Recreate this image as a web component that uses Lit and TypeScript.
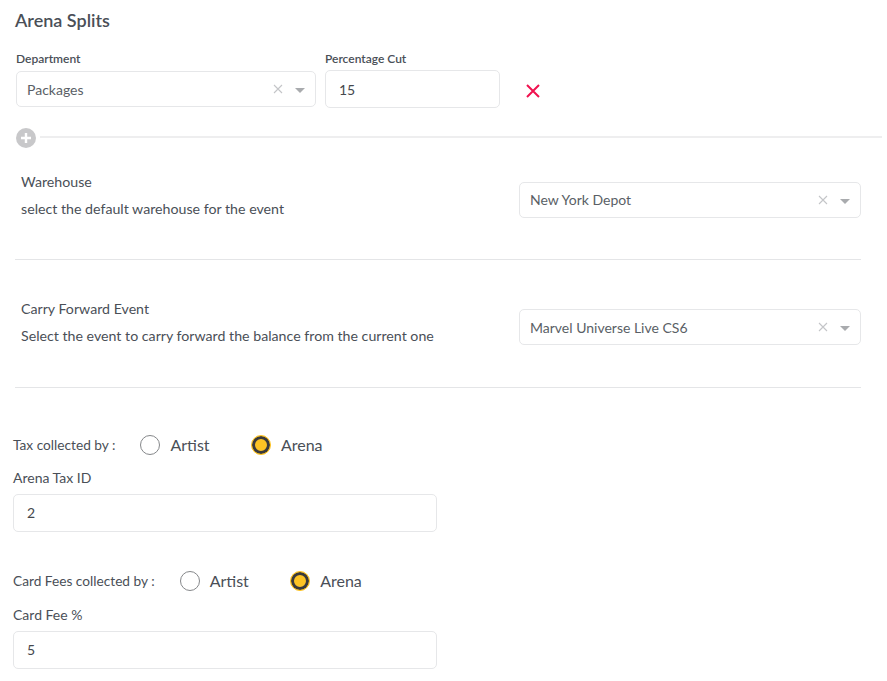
import { html, css, LitElement } from "lit";
import { customElement } from "lit/decorators.js";

@customElement("app-root")
export class AppRoot extends LitElement {
  static styles = css`
    :host {
      display: block;
      width: 887px;
      height: 681px;
      overflow: hidden;
      background: #fff;
      font-family: Lato, "Liberation Sans", sans-serif;
      color: #4a4f57;
      font-size: 14px;
    }
    * {
      box-sizing: border-box;
    }
    .title {
      margin: 0;
      padding: 9px 0 0 15px;
      height: 48px;
      font-size: 18px;
      line-height: 22px;
      font-weight: 600;
      color: #4a4f57;
    }
    .split {
      display: flex;
      align-items: flex-start;
      padding-left: 16px;
    }
    .split label {
      display: block;
      padding-top: 3px;
      font-size: 12px;
      line-height: 15px;
      height: 22px;
      font-weight: 600;
    }
    .dept {
      width: 300px;
      margin-right: 9px;
    }
    .dept label {
      height: 23px;
    }
    .pct {
      width: 175px;
    }
    .select {
      display: flex;
      align-items: center;
      height: 36px;
      border: 1px solid #e6e7e9;
      border-radius: 5px;
      padding: 0 10px;
      background: #fff;
      color: #5a5f66;
    }
    .select span {
      flex: 1;
      line-height: 20px;
      padding-top: 2px;
    }
    .select .clear {
      margin-right: 12px;
    }
    .select .caret {
      margin-top: 3px;
    }
    .input {
      display: flex;
      align-items: center;
      height: 38px;
      border: 1px solid #e6e7e9;
      border-radius: 5px;
      padding: 0 13px;
      color: #45484d;
    }
    .remove {
      margin: 35px 0 0 25px;
      display: block;
    }
    .adder {
      position: relative;
      margin: 28px 5px 0 40px;
      height: 2px;
      background: #eeeeef;
    }
    .plus {
      position: absolute;
      left: -24px;
      top: -8px;
    }
    .row {
      display: flex;
      justify-content: space-between;
      margin: 0 26px 0 15px;
      border-bottom: 1px solid #e4e5e7;
      padding-left: 6px;
    }
    .row.first {
      height: 122px;
      padding-top: 35px;
    }
    .row.second {
      height: 128px;
      padding-top: 40px;
    }
    .row .name,
    .row .desc {
      line-height: 18px;
      font-size: 14.2px;
    }
    .row .name {
      margin-bottom: 9px;
    }
    .row .select {
      width: 342px;
      margin-top: 9px;
    }
    .row.first .select span {
      padding-top: 0;
    }
    .collect {
      padding-left: 13px;
      width: 437px;
    }
    .collect .radios {
      display: flex;
      align-items: center;
      height: 20px;
      font-size: 13.7px;
    }
    .radios .lead {
      margin-right: 25px;
      padding-bottom: 2px;
    }
    .radio {
      display: flex;
      align-items: center;
      font-size: 16px;
      width: 110.5px;
    }
    .radio span {
      padding-bottom: 2px;
    }
    .radio i {
      display: block;
      width: 20px;
      height: 20px;
      border-radius: 50%;
      border: 1px solid #85878a;
      margin-right: 10px;
    }
    .radio.on i {
      border: 1px solid #fdc324;
      background: #fdc324;
      box-shadow: inset 0 0 0 3px #3a3a3c;
    }
    .collect .label {
      margin-top: 15px;
      height: 16px;
      line-height: 16px;
      font-size: 14px;
      margin-bottom: 8px;
    }
    .collect .input {
      padding-bottom: 2px;
    }
    .first-collect {
      margin-top: 47px;
    }
    .second-collect {
      margin-top: 39px;
    }
    .second-collect .label {
      margin-top: 16px;
    }
  `;

  cross() {
    return html`<svg class="clear" width="10" height="10" viewBox="0 0 10 10">
      <path d="M1 1l8 8M9 1l-8 8" stroke="#c4c5c8" stroke-width="1.1" fill="none" />
    </svg>`;
  }

  caret() {
    return html`<svg class="caret" width="10" height="5" viewBox="0 0 10 5">
      <path d="M0 0h10L5 5z" fill="#a9abae" />
    </svg>`;
  }

  select(value: string) {
    return html`<div class="select">
      <span>${value}</span>${this.cross()}${this.caret()}
    </div>`;
  }

  radios(lead: string) {
    return html`<div class="radios">
      <span class="lead">${lead}</span>
      <div class="radio"><i></i><span>Artist</span></div>
      <div class="radio on"><i></i><span>Arena</span></div>
    </div>`;
  }

  render() {
    return html`
      <h2 class="title">Arena Splits</h2>
      <div class="split">
        <div class="dept">
          <label>Department</label>
          ${this.select("Packages")}
        </div>
        <div class="pct">
          <label>Percentage Cut</label>
          <div class="input">15</div>
        </div>
        <svg class="remove" width="16" height="16" viewBox="0 0 16 16">
          <path d="M2 2l12 12M14 2L2 14" stroke="#f0124f" stroke-width="2" fill="none" />
        </svg>
      </div>
      <div class="adder">
        <svg class="plus" width="20" height="20" viewBox="0 0 20 20">
          <circle cx="10" cy="10" r="10" fill="#c8c8ca" />
          <path d="M10 5v10M5 10h10" stroke="#fff" stroke-width="2.4" />
        </svg>
      </div>
      <div class="row first">
        <div>
          <div class="name">Warehouse</div>
          <div class="desc">select the default warehouse for the event</div>
        </div>
        ${this.select("New York Depot")}
      </div>
      <div class="row second">
        <div>
          <div class="name">Carry Forward Event</div>
          <div class="desc">Select the event to carry forward the balance from the current one</div>
        </div>
        ${this.select("Marvel Universe Live CS6")}
      </div>
      <div class="collect first-collect">
        ${this.radios("Tax collected by :")}
        <div class="label">Arena Tax ID</div>
        <div class="input">2</div>
      </div>
      <div class="collect second-collect">
        ${this.radios("Card Fees collected by :")}
        <div class="label">Card Fee %</div>
        <div class="input">5</div>
      </div>
    `;
  }
}
